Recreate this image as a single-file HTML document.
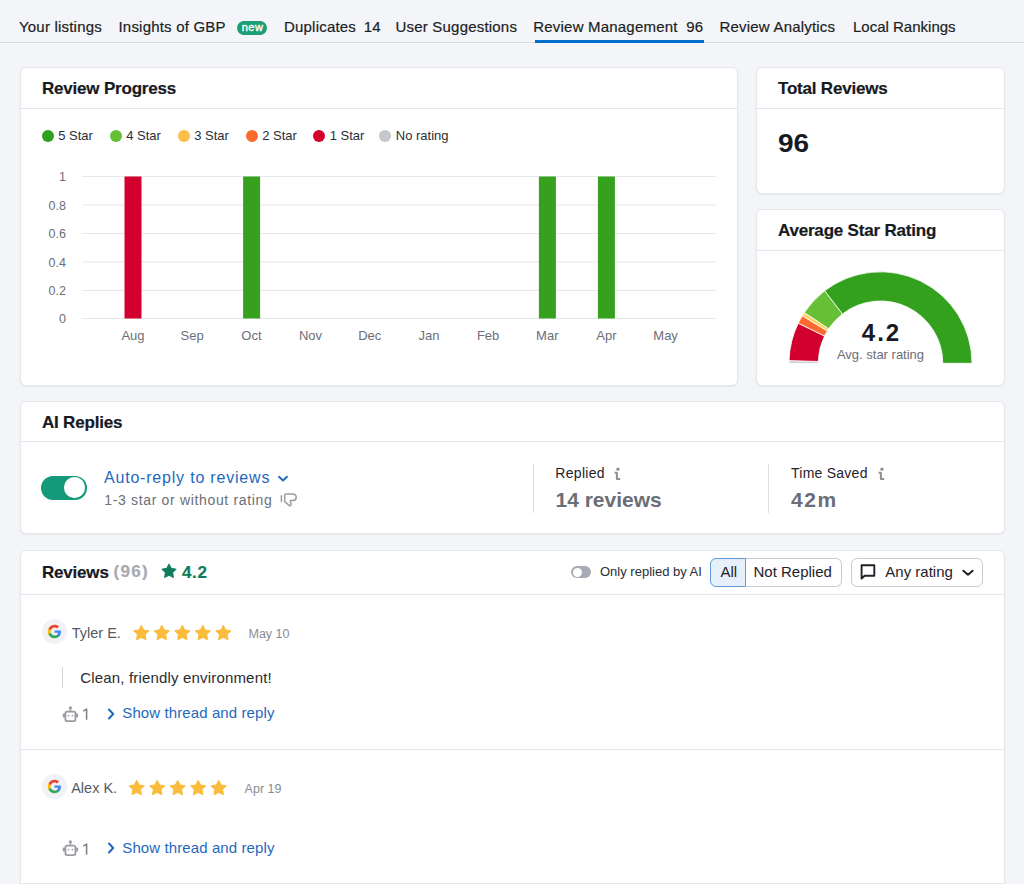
<!DOCTYPE html>
<html><head><meta charset="utf-8">
<style>
*{box-sizing:border-box;margin:0;padding:0}
html,body{width:1024px;height:884px;overflow:hidden;background:#f4f5f9;font-family:"Liberation Sans",sans-serif;color:#171a22}
.t{position:absolute;line-height:1;white-space:nowrap}
.card{position:absolute;background:#fff;border:1px solid #e4e6ea;border-radius:6px;box-shadow:0 1px 2px rgba(0,0,0,0.06)}
.hl{position:absolute;height:1px;background:#e6e7ec}
.tab{font-size:15px;color:#1c1e24;letter-spacing:0.2px;-webkit-text-stroke:0.2px #1c1e24}
.lg{font-size:13px;color:#2b2e36}
.yl{font-size:12.5px;color:#6c6e79;text-align:right}
.xl{font-size:13px;color:#6c6e79}
.ii{font-family:"Liberation Serif",serif;font-style:italic;font-size:15px;color:#9a9ca3}
.h{font-size:17px;font-weight:bold;color:#171a22;letter-spacing:-0.2px;-webkit-text-stroke:0.2px currentColor}
</style></head><body>
<!-- tab bar -->
<div style="position:absolute;left:0;top:42px;width:1024px;height:1px;background:#d9dbe1"></div>
<div class="t tab" style="left:19px;top:18.5px">Your listings</div>
<div class="t tab" style="left:118.5px;top:18.5px">Insights of GBP</div>
<div style="position:absolute;left:236.8px;top:20.6px;width:30.4px;height:14.2px;border-radius:7.1px;background:#1d9d74"></div>
<div class="t" style="left:241.8px;top:22.3px;font-size:11px;color:#fff;letter-spacing:0.45px;-webkit-text-stroke:0.35px #fff">new</div>
<div class="t tab" style="left:284px;top:18.5px">Duplicates</div>
<div class="t tab" style="left:363.7px;top:18.5px">14</div>
<div class="t tab" style="left:395.5px;top:18.5px">User Suggestions</div>
<div class="t tab" style="left:533.3px;top:18.5px">Review Management</div>
<div class="t tab" style="left:686.3px;top:18.5px">96</div>
<div style="position:absolute;left:534.5px;top:39.5px;width:169.5px;height:3px;background:#006dca"></div>
<div class="t tab" style="left:719.5px;top:18.5px">Review Analytics</div>
<div class="t tab" style="left:853px;top:18.5px;letter-spacing:0">Local Rankings</div>

<!-- Card 1: Review Progress -->
<div class="card" style="left:20px;top:67px;width:717.5px;height:319px"></div>
<div class="hl" style="left:21px;top:108px;width:716px"></div>
<div class="t h" style="left:42px;top:80px">Review Progress</div>
<div style="position:absolute;left:41.6px;top:129.5px;width:12px;height:12px;border-radius:50%;background:#2f9f1e"></div>
<div class="t lg" style="left:58.2px;top:129px">5 Star</div>
<div style="position:absolute;left:109.6px;top:129.5px;width:12px;height:12px;border-radius:50%;background:#67bf35"></div>
<div class="t lg" style="left:126.2px;top:129px">4 Star</div>
<div style="position:absolute;left:177.6px;top:129.5px;width:12px;height:12px;border-radius:50%;background:#fcbf47"></div>
<div class="t lg" style="left:194.2px;top:129px">3 Star</div>
<div style="position:absolute;left:245.6px;top:129.5px;width:12px;height:12px;border-radius:50%;background:#fb6a2d"></div>
<div class="t lg" style="left:262.2px;top:129px">2 Star</div>
<div style="position:absolute;left:313.1px;top:129.5px;width:12px;height:12px;border-radius:50%;background:#d1002f"></div>
<div class="t lg" style="left:329.7px;top:129px">1 Star</div>
<div style="position:absolute;left:379.2px;top:129.5px;width:12px;height:12px;border-radius:50%;background:#c5c7cd"></div>
<div class="t lg" style="left:395.8px;top:129px">No rating</div>
<svg style="position:absolute;left:0;top:0" width="1024" height="400">
<rect x="82.5" y="176.0" width="633.5" height="1" fill="#e7e8ec"/>
<rect x="82.5" y="204.5" width="633.5" height="1" fill="#e7e8ec"/>
<rect x="82.5" y="233.0" width="633.5" height="1" fill="#e7e8ec"/>
<rect x="82.5" y="261.5" width="633.5" height="1" fill="#e7e8ec"/>
<rect x="82.5" y="290.0" width="633.5" height="1" fill="#e7e8ec"/>
<rect x="82.5" y="318.0" width="633.5" height="1" fill="#e7e8ec"/>
<rect x="124.5" y="176.5" width="17" height="142" fill="#d1002f"/>
<rect x="243.1" y="176.5" width="17" height="142" fill="#35a11f"/>
<rect x="538.9" y="176.5" width="17" height="142" fill="#35a11f"/>
<rect x="597.9" y="176.5" width="17" height="142" fill="#35a11f"/>
</svg>
<div class="t yl" style="right:958px;top:171.0px">1</div>
<div class="t yl" style="right:958px;top:199.5px">0.8</div>
<div class="t yl" style="right:958px;top:228.0px">0.6</div>
<div class="t yl" style="right:958px;top:256.5px">0.4</div>
<div class="t yl" style="right:958px;top:285.0px">0.2</div>
<div class="t yl" style="right:958px;top:313.0px">0</div>
<div class="t xl" style="left:103.0px;width:60px;text-align:center;top:329.3px">Aug</div>
<div class="t xl" style="left:162.2px;width:60px;text-align:center;top:329.3px">Sep</div>
<div class="t xl" style="left:221.4px;width:60px;text-align:center;top:329.3px">Oct</div>
<div class="t xl" style="left:280.5px;width:60px;text-align:center;top:329.3px">Nov</div>
<div class="t xl" style="left:339.7px;width:60px;text-align:center;top:329.3px">Dec</div>
<div class="t xl" style="left:398.9px;width:60px;text-align:center;top:329.3px">Jan</div>
<div class="t xl" style="left:458.1px;width:60px;text-align:center;top:329.3px">Feb</div>
<div class="t xl" style="left:517.3px;width:60px;text-align:center;top:329.3px">Mar</div>
<div class="t xl" style="left:576.4px;width:60px;text-align:center;top:329.3px">Apr</div>
<div class="t xl" style="left:635.6px;width:60px;text-align:center;top:329.3px">May</div>

<!-- Card 2: Total Reviews -->
<div class="card" style="left:756px;top:67px;width:249px;height:127px"></div>
<div class="hl" style="left:757px;top:108px;width:247px"></div>
<div class="t h" style="left:778px;top:80px">Total Reviews</div>
<div class="t" style="left:778px;top:131px;font-size:25px;font-weight:bold;transform:scaleX(1.12);transform-origin:0 0">96</div>

<!-- Card 3: Avg Star Rating -->
<div class="card" style="left:756px;top:209px;width:249px;height:177px"></div>
<div class="hl" style="left:757px;top:250px;width:247px"></div>
<div class="t h" style="left:778px;top:222px">Average Star Rating</div>
<svg style="position:absolute;left:0;top:0" width="1024" height="400">
<path d="M789.00 363.30A91.5 91.5 0 0 1 789.04 360.59L818.23 361.45A62.3 62.3 0 0 0 818.20 363.30Z" fill="#c9cbd1" stroke="#fff" stroke-width="0.8"/>
<path d="M789.04 360.59A91.5 91.5 0 0 1 798.26 323.19L824.51 335.99A62.3 62.3 0 0 0 818.23 361.45Z" fill="#d1002f" stroke="#fff" stroke-width="0.8"/>
<path d="M798.26 323.19A91.5 91.5 0 0 1 802.32 315.76L827.27 330.93A62.3 62.3 0 0 0 824.51 335.99Z" fill="#fd6a2f" stroke="#fff" stroke-width="0.8"/>
<path d="M802.32 315.76A91.5 91.5 0 0 1 804.38 312.53L828.67 328.73A62.3 62.3 0 0 0 827.27 330.93Z" fill="#fdd35c" stroke="#fff" stroke-width="0.8"/>
<path d="M804.38 312.53A91.5 91.5 0 0 1 824.67 290.81L842.49 313.94A62.3 62.3 0 0 0 828.67 328.73Z" fill="#67bf35" stroke="#fff" stroke-width="0.8"/>
<path d="M824.67 290.81A91.5 91.5 0 0 1 972.00 363.30L942.80 363.30A62.3 62.3 0 0 0 842.49 313.94Z" fill="#34a11e" stroke="#fff" stroke-width="0.8"/>
</svg>
<div class="t" style="left:830px;width:101px;text-align:center;top:321px;font-size:24px;font-weight:bold;letter-spacing:2px;text-indent:2px">4.2</div>
<div class="t" style="left:830px;width:101px;text-align:center;top:347.7px;font-size:13px;color:#6c6e79">Avg. star rating</div>

<!-- Card 4: AI Replies -->
<div class="card" style="left:20px;top:401px;width:985px;height:133px"></div>
<div class="hl" style="left:21px;top:441px;width:983px"></div>
<div class="t h" style="left:42px;top:414px">AI Replies</div>
<div style="position:absolute;left:41.3px;top:475.7px;width:45.7px;height:24.3px;border-radius:12.2px;background:#14997a"></div>
<div style="position:absolute;left:64.3px;top:477.4px;width:20.6px;height:20.6px;border-radius:50%;background:#fff"></div>
<div class="t" style="left:104px;top:469.5px;font-size:16px;letter-spacing:0.8px;color:#1f69bd">Auto-reply to reviews</div>
<svg style="position:absolute;left:276px;top:473px" width="14" height="11" viewBox="0 0 14 11"><path d="M3 3.8 L7 7.5 L11 3.8" fill="none" stroke="#1f69bd" stroke-width="1.9" stroke-linecap="round" stroke-linejoin="round"/></svg>
<div class="t" style="left:104.3px;top:493.4px;font-size:14px;letter-spacing:0.66px;color:#6c6e79">1-3 star or without rating</div>
<svg style="position:absolute;left:279px;top:492px" width="20" height="17" viewBox="279 492 20 17"><path d="M281.4 495.8 V501.4" stroke="#9a9da4" stroke-width="1.5" stroke-linecap="round"/><path d="M284.7 495.3 Q284.7 493.9 286.1 493.9 H292.2 Q296.2 493.9 296.2 497.3 Q296.2 500.5 293 500.5 H290.4 L290.9 504.2 Q291.1 506.3 289.4 505.6 L284.7 501.6 Z" fill="none" stroke="#9a9da4" stroke-width="1.5" stroke-linejoin="round"/></svg>
<div style="position:absolute;left:533px;top:463.5px;width:1px;height:49px;background:#dcdee3"></div>
<div class="t" style="left:555.3px;top:465.8px;font-size:14px;letter-spacing:0.3px;color:#1f2229">Replied</div>
<svg style="position:absolute;left:610px;top:464px" width="14" height="18" viewBox="610 464 14 18"><circle cx="618" cy="469.2" r="1.65" fill="#8f9197"/><path d="M614.6 472.8 H616.9 V478.9 H620.2" fill="none" stroke="#8f9197" stroke-width="2" stroke-linejoin="round"/></svg>
<div class="t" style="left:555.5px;top:488.8px;font-size:21px;font-weight:bold;color:#6b6e76">14 reviews</div>
<div style="position:absolute;left:768px;top:463.5px;width:1px;height:49px;background:#dcdee3"></div>
<div class="t" style="left:791px;top:465.8px;font-size:14px;letter-spacing:0.25px;color:#1f2229">Time Saved</div>
<svg style="position:absolute;left:873.5px;top:464px" width="14" height="18" viewBox="610 464 14 18"><circle cx="618" cy="469.2" r="1.65" fill="#8f9197"/><path d="M614.6 472.8 H616.9 V478.9 H620.2" fill="none" stroke="#8f9197" stroke-width="2" stroke-linejoin="round"/></svg>
<div class="t" style="left:791px;top:488.8px;font-size:21px;font-weight:bold;letter-spacing:1.6px;color:#6b6e76">42m</div>


<!-- Card 5: Reviews -->
<div class="card" style="left:20px;top:550px;width:985px;height:350px"></div>
<div class="hl" style="left:21px;top:594px;width:983px"></div>
<div class="t h" style="left:42px;top:563.5px">Reviews</div>
<div class="t h" style="left:113.6px;top:562.7px;color:#a7aab1;letter-spacing:1.3px">(96)</div>
<svg style="position:absolute;left:160.5px;top:562.5px" width="16" height="16" viewBox="0 0 17 17"><path d="M8.50 1.00 L10.91 5.68 L16.11 6.53 L12.40 10.27 L13.20 15.47 L8.50 13.10 L3.80 15.47 L4.60 10.27 L0.89 6.53 L6.09 5.68Z" fill="#0e7c5b" stroke="#0e7c5b" stroke-width="1" stroke-linejoin="round"/></svg>
<div class="t h" style="left:182px;top:563.5px;color:#0e7c5b;letter-spacing:0.6px">4.2</div>
<div style="position:absolute;left:570.9px;top:565.9px;width:20.3px;height:12.4px;border-radius:6.2px;background:#a8abb3"></div>
<div style="position:absolute;left:572.6px;top:567.6px;width:9px;height:9px;border-radius:50%;background:#fff"></div>
<div class="t" style="left:600px;top:565.4px;font-size:13px;color:#2b2e36">Only replied by AI</div>
<div style="position:absolute;left:710px;top:557.7px;width:35.5px;height:29px;border:1px solid #5b9bd9;border-radius:6px 0 0 6px;background:#e7f0fa"></div>
<div class="t" style="left:720.5px;top:564px;font-size:15px;color:#1f2229">All</div>
<div style="position:absolute;left:745.5px;top:557.7px;width:96.5px;height:29px;border:1px solid #c9ccd2;border-left:none;border-radius:0 6px 6px 0;background:#fff"></div>
<div class="t" style="left:753.5px;top:564px;font-size:15px;color:#1f2229">Not Replied</div>
<div style="position:absolute;left:850.5px;top:557.7px;width:132.8px;height:29px;border:1px solid #c9ccd2;border-radius:6px;background:#fff"></div>
<svg style="position:absolute;left:859px;top:563px" width="18" height="18" viewBox="0 0 18 18"><path d="M2.6 15.5 V2.3 H15.3 V12.7 H5.6 Z" fill="none" stroke="#1f2229" stroke-width="1.9" stroke-linejoin="round"/></svg>
<div class="t" style="left:885.3px;top:564px;font-size:15px;color:#1f2229">Any rating</div>
<svg style="position:absolute;left:961px;top:567px" width="14" height="11" viewBox="0 0 14 11"><path d="M2.3 3.8 L7 7.8 L11.7 3.8" fill="none" stroke="#1f2229" stroke-width="2" stroke-linecap="round" stroke-linejoin="round"/></svg>
<svg style="position:absolute;left:41.5px;top:619px" width="25" height="25" viewBox="0 0 25 25"><circle cx="12.5" cy="12.5" r="12.6" fill="#f1f2f5"/><g transform="translate(5.8,5.8) scale(0.56)"><path d="M23.5 12.3c0-.8-.1-1.6-.2-2.3H12v4.4h6.5c-.3 1.5-1.1 2.7-2.4 3.6v3h3.9c2.2-2.1 3.5-5.1 3.5-8.7z" fill="#4285F4"/><path d="M12 24c3.2 0 6-1.1 8-2.9l-3.9-3c-1.1.7-2.5 1.2-4.1 1.2-3.1 0-5.8-2.1-6.7-5H1.3v3.1C3.3 21.4 7.4 24 12 24z" fill="#34A853"/><path d="M5.3 14.3c-.2-.7-.4-1.5-.4-2.3s.1-1.6.4-2.3V6.6H1.3C.5 8.2 0 10 0 12s.5 3.8 1.3 5.4l4-3.1z" fill="#FBBC05"/><path d="M12 4.8c1.8 0 3.4.6 4.6 1.8l3.4-3.4C18 1.2 15.2 0 12 0 7.4 0 3.3 2.6 1.3 6.6l4 3.1c.9-2.8 3.6-4.9 6.7-4.9z" fill="#EA4335"/></g></svg><div class="t" style="left:71.7px;top:626.2px;font-size:14.5px;color:#555962">Tyler E.</div><svg style="position:absolute;left:0;top:0" width="260" height="900"><g transform="translate(132.8 624.3)" fill="#fbbc3b" stroke="#fbbc3b" stroke-width="1" stroke-linejoin="round"><path transform="translate(0.0 0)" d="M8.50 1.00 L10.91 5.68 L16.11 6.53 L12.40 10.27 L13.20 15.47 L8.50 13.10 L3.80 15.47 L4.60 10.27 L0.89 6.53 L6.09 5.68Z"/><path transform="translate(20.5 0)" d="M8.50 1.00 L10.91 5.68 L16.11 6.53 L12.40 10.27 L13.20 15.47 L8.50 13.10 L3.80 15.47 L4.60 10.27 L0.89 6.53 L6.09 5.68Z"/><path transform="translate(41.0 0)" d="M8.50 1.00 L10.91 5.68 L16.11 6.53 L12.40 10.27 L13.20 15.47 L8.50 13.10 L3.80 15.47 L4.60 10.27 L0.89 6.53 L6.09 5.68Z"/><path transform="translate(61.5 0)" d="M8.50 1.00 L10.91 5.68 L16.11 6.53 L12.40 10.27 L13.20 15.47 L8.50 13.10 L3.80 15.47 L4.60 10.27 L0.89 6.53 L6.09 5.68Z"/><path transform="translate(82.0 0)" d="M8.50 1.00 L10.91 5.68 L16.11 6.53 L12.40 10.27 L13.20 15.47 L8.50 13.10 L3.80 15.47 L4.60 10.27 L0.89 6.53 L6.09 5.68Z"/></g></svg><div class="t" style="left:248.5px;top:627.9px;font-size:12.5px;color:#8a8d95">May 10</div><div style="position:absolute;left:62px;top:667px;width:1px;height:21px;background:#d3d5da"></div><div class="t" style="left:80.3px;top:669.8px;font-size:15px;letter-spacing:0.17px;color:#2a2c31">Clean, friendly environment!</div><svg style="position:absolute;left:61.5px;top:705.5px" width="18" height="18" viewBox="0 0 18 18"><circle cx="8.4" cy="1.8" r="1.6" fill="#9a9ca3"/><path d="M8.4 2.5V5.5" stroke="#9a9ca3" stroke-width="1.5"/><rect x="3.4" y="5.6" width="10" height="9.6" rx="1.6" fill="none" stroke="#9a9ca3" stroke-width="1.8"/><rect x="0.7" y="7.6" width="2.6" height="4" rx="1" fill="#9a9ca3"/><rect x="13.5" y="7.6" width="2.6" height="4" rx="1" fill="#9a9ca3"/><circle cx="6.5" cy="9.6" r="0.9" fill="#9a9ca3"/><circle cx="10.4" cy="9.6" r="0.9" fill="#9a9ca3"/></svg><svg style="position:absolute;left:82px;top:708px" width="8" height="13" viewBox="0 0 8 13"><path d="M1.3 3.2 L4.6 1 V11.7" fill="none" stroke="#7b7e86" stroke-width="1.5" stroke-linejoin="round"/></svg><svg style="position:absolute;left:106px;top:706.5px" width="10" height="14" viewBox="0 0 10 14"><path d="M3 2.5 L7.2 7 L3 11.5" fill="none" stroke="#1f69bd" stroke-width="2" stroke-linecap="round" stroke-linejoin="round"/></svg><div class="t" style="left:122.3px;top:705.3px;font-size:15px;color:#1f69bd;letter-spacing:0.1px">Show thread and reply</div><svg style="position:absolute;left:41.5px;top:774px" width="25" height="25" viewBox="0 0 25 25"><circle cx="12.5" cy="12.5" r="12.6" fill="#f1f2f5"/><g transform="translate(5.8,5.8) scale(0.56)"><path d="M23.5 12.3c0-.8-.1-1.6-.2-2.3H12v4.4h6.5c-.3 1.5-1.1 2.7-2.4 3.6v3h3.9c2.2-2.1 3.5-5.1 3.5-8.7z" fill="#4285F4"/><path d="M12 24c3.2 0 6-1.1 8-2.9l-3.9-3c-1.1.7-2.5 1.2-4.1 1.2-3.1 0-5.8-2.1-6.7-5H1.3v3.1C3.3 21.4 7.4 24 12 24z" fill="#34A853"/><path d="M5.3 14.3c-.2-.7-.4-1.5-.4-2.3s.1-1.6.4-2.3V6.6H1.3C.5 8.2 0 10 0 12s.5 3.8 1.3 5.4l4-3.1z" fill="#FBBC05"/><path d="M12 4.8c1.8 0 3.4.6 4.6 1.8l3.4-3.4C18 1.2 15.2 0 12 0 7.4 0 3.3 2.6 1.3 6.6l4 3.1c.9-2.8 3.6-4.9 6.7-4.9z" fill="#EA4335"/></g></svg><div class="t" style="left:71.2px;top:781.2px;font-size:14.5px;color:#555962">Alex K.</div><svg style="position:absolute;left:0;top:0" width="260" height="900"><g transform="translate(128.2 779.3)" fill="#fbbc3b" stroke="#fbbc3b" stroke-width="1" stroke-linejoin="round"><path transform="translate(0.0 0)" d="M8.50 1.00 L10.91 5.68 L16.11 6.53 L12.40 10.27 L13.20 15.47 L8.50 13.10 L3.80 15.47 L4.60 10.27 L0.89 6.53 L6.09 5.68Z"/><path transform="translate(20.5 0)" d="M8.50 1.00 L10.91 5.68 L16.11 6.53 L12.40 10.27 L13.20 15.47 L8.50 13.10 L3.80 15.47 L4.60 10.27 L0.89 6.53 L6.09 5.68Z"/><path transform="translate(41.0 0)" d="M8.50 1.00 L10.91 5.68 L16.11 6.53 L12.40 10.27 L13.20 15.47 L8.50 13.10 L3.80 15.47 L4.60 10.27 L0.89 6.53 L6.09 5.68Z"/><path transform="translate(61.5 0)" d="M8.50 1.00 L10.91 5.68 L16.11 6.53 L12.40 10.27 L13.20 15.47 L8.50 13.10 L3.80 15.47 L4.60 10.27 L0.89 6.53 L6.09 5.68Z"/><path transform="translate(82.0 0)" d="M8.50 1.00 L10.91 5.68 L16.11 6.53 L12.40 10.27 L13.20 15.47 L8.50 13.10 L3.80 15.47 L4.60 10.27 L0.89 6.53 L6.09 5.68Z"/></g></svg><div class="t" style="left:244.6px;top:782.9px;font-size:12.5px;color:#8a8d95">Apr 19</div><svg style="position:absolute;left:61.5px;top:840.3px" width="18" height="18" viewBox="0 0 18 18"><circle cx="8.4" cy="1.8" r="1.6" fill="#9a9ca3"/><path d="M8.4 2.5V5.5" stroke="#9a9ca3" stroke-width="1.5"/><rect x="3.4" y="5.6" width="10" height="9.6" rx="1.6" fill="none" stroke="#9a9ca3" stroke-width="1.8"/><rect x="0.7" y="7.6" width="2.6" height="4" rx="1" fill="#9a9ca3"/><rect x="13.5" y="7.6" width="2.6" height="4" rx="1" fill="#9a9ca3"/><circle cx="6.5" cy="9.6" r="0.9" fill="#9a9ca3"/><circle cx="10.4" cy="9.6" r="0.9" fill="#9a9ca3"/></svg><svg style="position:absolute;left:82px;top:842.8px" width="8" height="13" viewBox="0 0 8 13"><path d="M1.3 3.2 L4.6 1 V11.7" fill="none" stroke="#7b7e86" stroke-width="1.5" stroke-linejoin="round"/></svg><svg style="position:absolute;left:106px;top:841.3px" width="10" height="14" viewBox="0 0 10 14"><path d="M3 2.5 L7.2 7 L3 11.5" fill="none" stroke="#1f69bd" stroke-width="2" stroke-linecap="round" stroke-linejoin="round"/></svg><div class="t" style="left:122.3px;top:840.1px;font-size:15px;color:#1f69bd;letter-spacing:0.1px">Show thread and reply</div>
<div class="hl" style="left:21px;top:749px;width:983px"></div>
<div class="hl" style="left:21px;top:883px;width:983px"></div>
</body></html>
